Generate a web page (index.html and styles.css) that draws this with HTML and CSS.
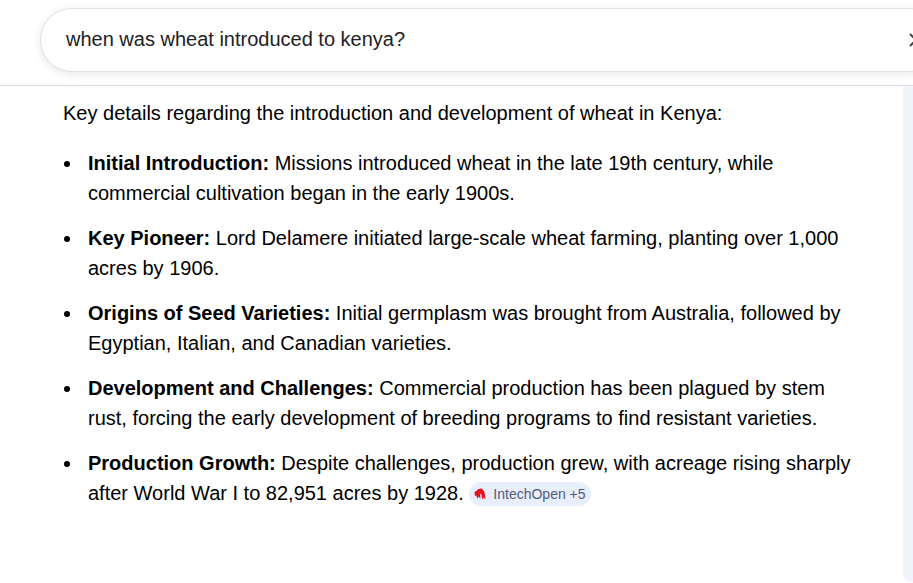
FILE: index.html
```html
<!DOCTYPE html>
<html lang="en">
<head>
    <meta charset="UTF-8">
    <meta name="viewport" content="width=device-width, initial-scale=1.0">
    <title>when was wheat introduced to kenya?</title>
    <link rel="stylesheet" href="styles.css">
</head>
<body>

<header class="top-bar">
    <div class="search-box">
        <span class="search-text">when was wheat introduced to kenya?</span>
        <svg class="clear-icon" width="16" height="16" viewBox="0 0 16 16">
            <path d="M2 2 L14 14 M14 2 L2 14" stroke="#444746" stroke-width="2" fill="none"/>
        </svg>
    </div>
</header>

<div class="page">
    <main class="answer">
        <p class="intro">Key details regarding the introduction and development of wheat in Kenya:</p>
        <ul class="details">
            <li><b>Initial Introduction:</b> Missions introduced wheat in the late 19th century, while commercial cultivation began in the early 1900s.</li>
            <li><b>Key Pioneer:</b> Lord Delamere initiated large-scale wheat farming, planting over 1,000 acres by 1906.</li>
            <li><b>Origins of Seed Varieties:</b> Initial germplasm was brought from Australia, followed by Egyptian, Italian, and Canadian varieties.</li>
            <li><b>Development and Challenges:</b> Commercial production has been plagued by stem rust, forcing the early development of breeding programs to find resistant varieties.</li>
            <li><b>Production Growth:</b> Despite challenges, production grew, with acreage rising sharply after World War I to 82,951 acres by 1928.
                <span class="source-chip">
                    <svg class="source-icon" width="12" height="12" viewBox="0 0 12 12">
                        <path d="M0.5 5 Q1 2.5 2.5 3 Q3.5 0.5 6.5 0.5 Q10 1 10.8 6 L11.5 11.5 L9.5 9.5 L8 11.5 L7.5 6.5 Q7 5.5 6.3 6 L6.3 10.5 L4.5 8.5 L3 11 L2.5 7.5 L1 8 Z" fill="#e8101c"/>
                    </svg>
                    IntechOpen +5
                </span>
            </li>
        </ul>
    </main>
    <aside class="side-panel"></aside>
</div>

</body>
</html>
```

FILE: styles.css
```css
html, body {
    height: 100%;
}

body {
    margin: 0;
    background-color: #fff;
    color: #000;
    font-family: "Liberation Sans", Arial, sans-serif;
    overflow: hidden;
    display: flex;
    flex-direction: column;
}

.top-bar {
    height: 85px;
    flex-shrink: 0;
    border-bottom: 1px solid #dadce0;
    padding-left: 40px;
    overflow: hidden;
}

.search-box {
    margin-top: 8px;
    width: 900px;
    height: 64px;
    box-sizing: border-box;
    border: 1px solid #dfe1e5;
    border-radius: 32px;
    box-shadow: 0 2px 8px rgba(32, 33, 36, 0.1);
    display: flex;
    align-items: center;
    justify-content: space-between;
    padding: 0 15px 0 25px;
    background-color: #fff;
}

.search-text {
    font-size: 20px;
    color: #202124;
    margin-bottom: 2px;
}

.page {
    flex: 1;
    display: flex;
    justify-content: space-between;
    min-height: 0;
}

.answer {
    width: 800px;
    padding: 12px 0 0 63px;
    font-size: 20px;
    line-height: 30px;
}

.intro {
    margin: 0 0 20px;
}

.details {
    margin: 0;
    padding: 0 0 0 25px;
    list-style: none;
}

.details li {
    margin-bottom: 15px;
}

/* small bullet sitting closer to the margin than the default marker */
.details li::before {
    content: "";
    display: inline-block;
    width: 6px;
    height: 6px;
    margin-left: -24px;
    margin-right: 18px;
    vertical-align: 3px;
    border-radius: 50%;
    background-color: #000;
}

.source-chip {
    display: inline-flex;
    align-items: center;
    gap: 7px;
    height: 24px;
    padding: 0 5px;
    border-radius: 12px;
    background-color: #e8eefc;
    color: #545a7c;
    font-size: 14px;
    line-height: 24px;
}

.side-panel {
    width: 10px;
    margin-bottom: 1px;
    background-color: #f0f4fd;
    border-bottom-left-radius: 8px;
}
```
